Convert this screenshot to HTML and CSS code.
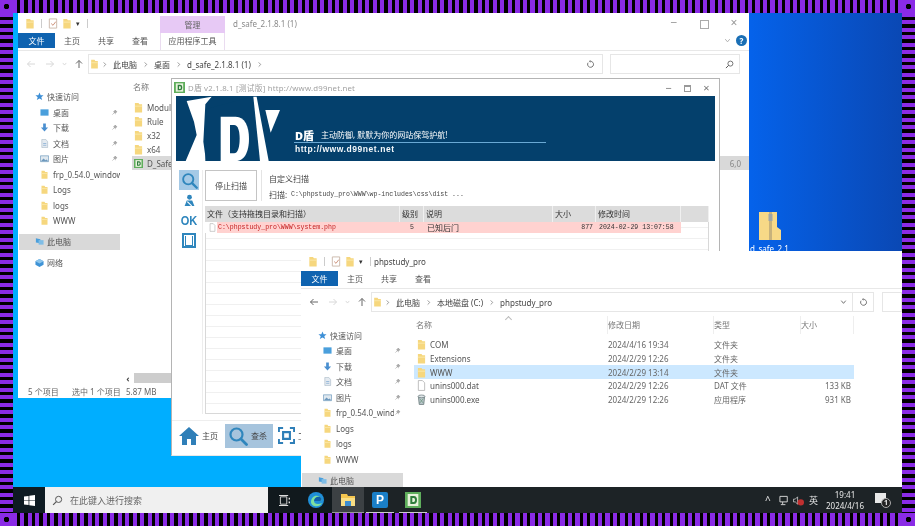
FILE: index.html
```html
<!DOCTYPE html>
<html lang="zh-CN">
<head>
<meta charset="utf-8">
<title>D盾 扫描</title>
<link rel="stylesheet" href="styles.css">
</head>
<body>
<svg class="defs" width="0" height="0" aria-hidden="true">
  <symbol id="folder" viewBox="0 0 10 12"><path d="M1 1h4l1 1.500h3v9H1z" fill="#f6d77e"/><path d="M1 4h8v1H1z" fill="#fbe9ad"/></symbol>
  <symbol id="check" viewBox="0 0 10 12"><path d="M1 1h8v10H1z" fill="#fff" stroke="#c9b7a8"/><path d="M3 6l2 2 3-4" fill="none" stroke="#c98a70"/></symbol>
  <symbol id="pin" viewBox="0 0 10 10"><path d="M2 8l2.500-2.500M3.500 4l3 3M6 1.500l2.500 2.500-2.500 2-2-2z" fill="#aaa" stroke="#999" stroke-width=".8"/></symbol>
  <symbol id="star" viewBox="0 0 10 10"><path d="M5 .5l1.300 3H9.500L7 5.700 8 9 5 7.200 2 9l1-3.300L.5 3.500h3.200z" fill="#3d8fd6"/></symbol>
  <symbol id="desk" viewBox="0 0 10 10"><path d="M.5 1.500h9v7h-9z" fill="#4a9fdc"/></symbol>
  <symbol id="down" viewBox="0 0 10 10"><path d="M3.500 .5h3v4.500H9L5 9.500 1 5h2.500z" fill="#4a8fd0"/></symbol>
  <symbol id="docs" viewBox="0 0 10 10"><path d="M2 .5h4.500L8.500 3v6.500H2z" fill="#e4eaf0" stroke="#9fb0c0" stroke-width=".6"/><path d="M3.500 5h3.500M3.500 7h3.500" stroke="#6fa0cc" stroke-width=".7"/></symbol>
  <symbol id="pics" viewBox="0 0 10 10"><path d="M.5 2h9v6.500h-9z" fill="#dfe8ef" stroke="#5f8fb8" stroke-width=".7"/><path d="M1 8l3-3 2 2 1.500-1L9 8z" fill="#6c98bd"/></symbol>
  <symbol id="pc" viewBox="0 0 10 10"><path d="M1 1.500l5 1v4.500L1 6z" fill="#4a9fdc"/><path d="M4 3.500h5.500v5H4z" fill="#7fbde6"/></symbol>
  <symbol id="net" viewBox="0 0 10 10"><path d="M5 1l4.500 2.500v4L5 10 .5 7.500v-4z" fill="#3f93d6"/><path d="M.5 3.500L5 6l4.500-2.500L5 1z" fill="#8cc5ec"/></symbol>
  <symbol id="file" viewBox="0 0 10 12"><path d="M1.500 .5h4.500l2.500 2.500v8.500h-7z" fill="#fff" stroke="#a8a8a8" stroke-width=".8"/></symbol>
  <symbol id="uninst" viewBox="0 0 10 12"><path d="M1.500 2.500h7l-1 9h-5z" fill="#bcc8cc" stroke="#5c6c70" stroke-width=".8"/><ellipse cx="5" cy="2.500" rx="3.800" ry="1.500" fill="#dfe6e8" stroke="#5c6c70" stroke-width=".7"/><path d="M3 5l4 5M7 5l-4 5" stroke="#5c8c70" stroke-width=".7"/></symbol>
  <symbol id="glass" viewBox="0 0 20 20"><circle cx="8.500" cy="8.500" r="6" fill="none" stroke="#2f86bd" stroke-width="2.200"/><path d="M13 13l5.500 5.500" stroke="#2f86bd" stroke-width="2.800" stroke-linecap="round"/></symbol>
  <symbol id="search-mini" viewBox="0 0 10 10"><circle cx="6" cy="4" r="2.800" fill="none" stroke="#555" stroke-width=".9"/><path d="M4 6L1 9" stroke="#555" stroke-width="1.100"/></symbol>
  <symbol id="refresh" viewBox="0 0 10 10"><path d="M5 1.500A3.300 3.300 0 1 1 2.300 3" fill="none" stroke="#666"/><path d="M5 0v3L3.300 1.500z" fill="#666"/></symbol>
  <symbol id="dlogo" viewBox="0 0 12 12"><path d="M0 0h12v12H0z" fill="#5fae5c"/><path d="M2 1.500h8v9H2z" fill="#e8f2dc"/><path d="M4 3h2.500c2 0 2.500 1.500 2.500 3s-.5 3-2.500 3H4z" fill="#2f7d3c"/><path d="M5.500 4.500h1c.8 0 1 .8 1 1.500s-.2 1.500-1 1.500h-1z" fill="#e8f2dc"/></symbol>
  <symbol id="nav-back" viewBox="0 0 10 10"><path d="M9 5H1.500M4.500 2L1.500 5l3 3" fill="none" stroke="currentColor"/></symbol>
  <symbol id="nav-fwd" viewBox="0 0 10 10"><path d="M1 5h7.500M5.500 2l3 3-3 3" fill="none" stroke="currentColor"/></symbol>
  <symbol id="nav-up" viewBox="0 0 10 10"><path d="M5 9V1.500M2 4.500l3-3 3 3" fill="none" stroke="currentColor"/></symbol>
  <symbol id="chev" viewBox="0 0 10 10"><path d="M2.500 3.500L5 6.500l2.500-3" fill="none" stroke="currentColor"/></symbol>
  <symbol id="crumb" viewBox="0 0 6 8"><path d="M2 1.500L4.500 4 2 6.500" fill="none" stroke="#888"/></symbol>
</svg>

<div class="frame">
  <i class="corner"></i><div class="stripes-h"></div><i class="corner"></i>
  <div class="stripes-v"></div>
  <main class="desktop">
    <div class="desk-icon">
      <svg class="zip" viewBox="0 0 22 28"><path d="M0 0h18v15l4 3v10H0z" fill="#f7d987"/><path d="M10 0h3v28h-3z" fill="#c7b27c"/><path d="M9.500 2h4v7h-4z" fill="#9ea6a8"/></svg>
      <span>d_safe_2.1</span>
    </div>

    <section class="win win-back">
      <header class="qat">
        <svg class="q-ico"><use href="#folder"/></svg><i class="q-sep"></i>
        <svg class="q-ico"><use href="#check"/></svg>
        <svg class="q-ico"><use href="#folder"/></svg>
        <span class="q-drop">▾</span><i class="q-sep"></i>
        <div class="ctx-title">管理</div>
        <span class="win-title">d_safe_2.1.8.1 (1)</span>
        <div class="caption"><span class="cap-btn">−</span><span class="cap-btn cap-max"></span><span class="cap-btn cap-x">×</span></div>
      </header>
      <nav class="tabs">
        <span class="tab tab-file">文件</span><span class="tab">主页</span><span class="tab">共享</span><span class="tab">查看</span>
        <span class="tab tab-ctx">应用程序工具</span>
        <svg class="ribbon-chev"><use href="#chev"/></svg><span class="help">?</span>
      </nav>
      <div class="addr">
        <svg class="nav-ico nav-dim"><use href="#nav-back"/></svg>
        <svg class="nav-ico nav-dim"><use href="#nav-fwd"/></svg>
        <svg class="nav-ico nav-chev"><use href="#chev"/></svg>
        <svg class="nav-ico nav-on"><use href="#nav-up"/></svg>
        <div class="addr-box addr-box-back">
          <svg class="crumb-f"><use href="#folder"/></svg><svg class="crumb"><use href="#crumb"/></svg>
          <span>此电脑</span><svg class="crumb"><use href="#crumb"/></svg>
          <span>桌面</span><svg class="crumb"><use href="#crumb"/></svg>
          <span>d_safe_2.1.8.1 (1)</span><svg class="crumb"><use href="#crumb"/></svg>
          <svg class="addr-refresh"><use href="#refresh"/></svg>
        </div>
        <div class="search-box search-back"><svg class="search-ico"><use href="#search-mini"/></svg></div>
      </div>
      <div class="body">
        <aside class="side side-back">
          <div class="side-row side-head"><svg class="s-ico"><use href="#star"/></svg>快速访问</div>
          <div class="side-row"><svg class="s-ico"><use href="#desk"/></svg><span class="s-name">桌面</span><svg class="pin"><use href="#pin"/></svg></div>
          <div class="side-row"><svg class="s-ico"><use href="#down"/></svg><span class="s-name">下载</span><svg class="pin"><use href="#pin"/></svg></div>
          <div class="side-row"><svg class="s-ico"><use href="#docs"/></svg><span class="s-name">文档</span><svg class="pin"><use href="#pin"/></svg></div>
          <div class="side-row"><svg class="s-ico"><use href="#pics"/></svg><span class="s-name">图片</span><svg class="pin"><use href="#pin"/></svg></div>
          <div class="side-row"><svg class="s-ico"><use href="#folder"/></svg><span class="s-name">frp_0.54.0_window</span></div>
          <div class="side-row"><svg class="s-ico"><use href="#folder"/></svg><span class="s-name">Logs</span></div>
          <div class="side-row"><svg class="s-ico"><use href="#folder"/></svg><span class="s-name">logs</span></div>
          <div class="side-row"><svg class="s-ico"><use href="#folder"/></svg><span class="s-name">WWW</span></div>
          <div class="side-row side-head side-sel side-gap"><svg class="s-ico"><use href="#pc"/></svg>此电脑</div>
          <div class="side-row side-head side-gap"><svg class="s-ico"><use href="#net"/></svg>网络</div>
        </aside>
        <div class="list list-back">
          <div class="l-head">名称</div>
          <div class="l-row"><svg class="l-ico"><use href="#folder"/></svg>Modules</div>
          <div class="l-row"><svg class="l-ico"><use href="#folder"/></svg>Rule</div>
          <div class="l-row"><svg class="l-ico"><use href="#folder"/></svg>x32</div>
          <div class="l-row"><svg class="l-ico"><use href="#folder"/></svg>x64</div>
          <div class="l-row l-sel-grey"><svg class="l-ico"><use href="#dlogo"/></svg>D_Safe<span class="l-size">6,0</span></div>
          <div class="hscroll"><span class="hs-arrow">‹</span><i class="hs-thumb"></i></div>
        </div>
      </div>
      <footer class="status"><span>5 个项目</span><span>选中 1 个项目</span><span>5.87 MB</span></footer>
    </section>

    <section class="dwin">
      <header class="d-title">
        <svg class="d-logo"><use href="#dlogo"/></svg>
        <span class="d-title-text">D盾 v2.1.8.1 [测试版] http://www.d99net.net</span>
        <div class="d-caption"><span>−</span><span class="d-max"></span><span>×</span></div>
      </header>
      <div class="banner">
        <svg class="banner-logo" viewBox="18 63 354 195">
          <path d="M50 78L125 65 106 88 100 200 108 258H47L80 180 72 140z" fill="#fff"/>
          <path d="M110 102L245 65 258 258H106z" fill="#04406c"/>
          <path d="M152 125h45c28 0 40 30 40 66s-12 67-40 67h-45z" fill="#fff"/>
          <path d="M180 150h12c12 0 17 18 17 41s-5 44-17 44h-12z" fill="#04406c"/>
          <path d="M250 65h10l36 193h-26z" fill="#fff"/>
          <path d="M286 105h44l-28 68z" fill="#fff"/>
        </svg>
        <div class="banner-copy">
          <div class="slogan"><b>D盾</b><span>主动防御, 默默为你的网站保驾护航!</span></div>
          <div class="banner-url">http://www.d99net.net</div>
        </div>
      </div>
      <div class="d-main">
        <div class="d-tools">
          <span class="tool tool-on"><svg class="tool-glass"><use href="#glass"/></svg></span>
          <span class="tool"><svg class="tool-user" viewBox="0 0 12 12"><circle cx="6" cy="3" r="2.200" fill="#2f86bd"/><path d="M1.500 11l2-5h5l2 5z" fill="#2f86bd"/><path d="M4 7l4 4" stroke="#fff"/></svg></span>
          <span class="tool tool-ok">OK</span>
          <span class="tool"><i class="tool-box"></i></span>
        </div>
        <div class="d-content">
          <div class="scan-bar">
            <button class="stop-btn">停止扫描</button>
            <div class="scan-info">
              <div>自定义扫描</div>
              <div class="scan-path"><span class="scan-label">扫描:</span><span class="mono">C:\phpstudy_pro\WWW\wp-includes\css\dist ...</span></div>
            </div>
          </div>
          <div class="tbl">
            <div class="t-row t-head">
              <span>文件（支持拖拽目录和扫描）</span><span>级别</span><span>说明</span><span>大小</span><span>修改时间</span><span></span>
            </div>
            <div class="t-row t-hit">
              <span class="t-file"><svg class="t-ico"><use href="#file"/></svg><em class="mono t-path">C:\phpstudy_pro\WWW\system.php</em></span>
              <span class="t-c mono">5</span><span class="t-desc">已知后门</span><span class="t-r mono">877</span><span class="mono t-date">2024-02-29 13:07:58</span><span class="t-none"></span>
            </div>
          </div>
        </div>
      </div>
      <nav class="d-nav">
        <span class="d-nav-item">
          <svg class="d-nav-ico" viewBox="0 0 20 20"><path d="M10 1L0 10h3v9h5v-6h4v6h5v-9h3z" fill="#2f7fb8"/></svg>主页
        </span>
        <span class="d-nav-item d-nav-on"><svg class="d-nav-ico"><use href="#glass"/></svg>查杀</span>
        <span class="d-nav-item"><svg class="d-nav-scan" viewBox="0 0 20 20"><path d="M1 6V1h5M14 1h5v5M19 14v5h-5M6 19H1v-5" fill="none" stroke="#2f7fb8" stroke-width="2.500"/><path d="M6 6h8v8H6z" fill="none" stroke="#2f7fb8" stroke-width="2.500"/></svg>工具</span>
      </nav>
    </section>

    <section class="win win-front">
      <header class="qat">
        <svg class="q-ico"><use href="#folder"/></svg><i class="q-sep"></i>
        <svg class="q-ico"><use href="#check"/></svg>
        <svg class="q-ico"><use href="#folder"/></svg>
        <span class="q-drop">▾</span><i class="q-sep"></i>
        <span class="front-title">phpstudy_pro</span>
      </header>
      <nav class="tabs">
        <span class="tab tab-file">文件</span><span class="tab">主页</span><span class="tab">共享</span><span class="tab">查看</span>
      </nav>
      <div class="addr">
        <svg class="nav-ico nav-on"><use href="#nav-back"/></svg>
        <svg class="nav-ico nav-dim"><use href="#nav-fwd"/></svg>
        <svg class="nav-ico nav-chev"><use href="#chev"/></svg>
        <svg class="nav-ico nav-on"><use href="#nav-up"/></svg>
        <div class="addr-box addr-box-front">
          <svg class="crumb-f"><use href="#folder"/></svg><svg class="crumb"><use href="#crumb"/></svg>
          <span>此电脑</span><svg class="crumb"><use href="#crumb"/></svg>
          <span>本地磁盘 (C:)</span><svg class="crumb"><use href="#crumb"/></svg>
          <span>phpstudy_pro</span>
          <svg class="addr-chev"><use href="#chev"/></svg><i class="addr-sep"></i>
          <svg class="addr-refresh addr-refresh-front"><use href="#refresh"/></svg>
        </div>
        <div class="search-box search-front"></div>
      </div>
      <div class="body">
        <aside class="side side-front">
          <div class="side-row side-head"><svg class="s-ico"><use href="#star"/></svg>快速访问</div>
          <div class="side-row"><svg class="s-ico"><use href="#desk"/></svg><span class="s-name">桌面</span><svg class="pin"><use href="#pin"/></svg></div>
          <div class="side-row"><svg class="s-ico"><use href="#down"/></svg><span class="s-name">下载</span><svg class="pin"><use href="#pin"/></svg></div>
          <div class="side-row"><svg class="s-ico"><use href="#docs"/></svg><span class="s-name">文档</span><svg class="pin"><use href="#pin"/></svg></div>
          <div class="side-row"><svg class="s-ico"><use href="#pics"/></svg><span class="s-name">图片</span><svg class="pin"><use href="#pin"/></svg></div>
          <div class="side-row"><svg class="s-ico"><use href="#folder"/></svg><span class="s-name">frp_0.54.0_wind</span><svg class="pin"><use href="#pin"/></svg></div>
          <div class="side-row"><svg class="s-ico"><use href="#folder"/></svg><span class="s-name">Logs</span></div>
          <div class="side-row"><svg class="s-ico"><use href="#folder"/></svg><span class="s-name">logs</span></div>
          <div class="side-row"><svg class="s-ico"><use href="#folder"/></svg><span class="s-name">WWW</span></div>
          <div class="side-row side-head side-sel side-gap"><svg class="s-ico"><use href="#pc"/></svg>此电脑</div>
        </aside>
        <div class="list list-front">
          <span class="sort-caret"></span>
          <div class="f-row f-head"><span>名称</span><span>修改日期</span><span>类型</span><span>大小</span></div>
          <div class="f-row"><span class="f-name"><svg class="l-ico"><use href="#folder"/></svg>COM</span><span>2024/4/16 19:34</span><span>文件夹</span><span></span></div>
          <div class="f-row"><span class="f-name"><svg class="l-ico"><use href="#folder"/></svg>Extensions</span><span>2024/2/29 12:26</span><span>文件夹</span><span></span></div>
          <div class="f-row f-sel"><span class="f-name"><svg class="l-ico"><use href="#folder"/></svg>WWW</span><span>2024/2/29 13:14</span><span>文件夹</span><span></span></div>
          <div class="f-row"><span class="f-name"><svg class="l-ico"><use href="#file"/></svg>unins000.dat</span><span>2024/2/29 12:26</span><span>DAT 文件</span><span class="f-size">133 KB</span></div>
          <div class="f-row"><span class="f-name"><svg class="l-ico"><use href="#uninst"/></svg>unins000.exe</span><span>2024/2/29 12:26</span><span>应用程序</span><span class="f-size">931 KB</span></div>
        </div>
      </div>
    </section>

    <footer class="taskbar">
      <span class="start"><svg class="win-logo" viewBox="0 0 12 12"><path d="M0 1.700L5 1v4.600H0zM5.800.9L12 0v5.600H5.800zM0 6.400h5V11l-5-.7zM5.800 6.400H12V12l-6.200-.9z" fill="#fff"/></svg></span>
      <div class="tb-search"><svg class="tb-search-ico"><use href="#search-mini"/></svg><span>在此键入进行搜索</span></div>
      <span class="tb-btn tb-dark"><svg class="tb-view" viewBox="0 0 12 12"><path d="M1.500 2h7v8h-7z" fill="none" stroke="#ddd"/><path d="M0 0h10v1H0zM0 11h10v1H0zM10.500 3h1.500v2h-1.500zM10.500 7h1.500v2h-1.500z" fill="#ddd"/></svg></span>
      <span class="tb-btn tb-dark"><svg class="tb-app" viewBox="0 0 16 16"><circle cx="8" cy="8" r="8" fill="#1f8fd8"/><path d="M3 10c0-5 5-8 9-5 2 1.500 2 4 0 4H6c0 3 4 4 8 2-2 5-11 4-11-1z" fill="#7fe0a0"/><path d="M6 9c0-3 3-5 6-4 2 1 2 4 0 4z" fill="#0f5fa8"/></svg></span>
      <span class="tb-btn tb-active"><svg class="tb-app" viewBox="0 0 16 16"><path d="M1 2h6l1 2h7v10H1z" fill="#f5c64f"/><path d="M1 6h14v8H1z" fill="#fadf85"/><path d="M5 9h6v5H5z" fill="#3f8fd0"/></svg></span>
      <span class="tb-btn tb-running"><i class="p-app">P</i></span>
      <span class="tb-btn tb-running"><svg class="tb-app" viewBox="0 0 12 12"><use href="#dlogo"/></svg></span>
      <div class="tray">
        <span class="tray-caret">^</span>
        <svg class="tray-ico tray-net" viewBox="0 0 12 12"><path d="M1 1.500h8v6H1z" fill="none" stroke="#ddd"/><path d="M4 7.500V10M2 10.500h5" stroke="#ddd"/></svg>
        <svg class="tray-ico tray-vol" viewBox="0 0 12 12"><path d="M.5 4.500h2L5 2v8L2.500 7.500h-2z" fill="none" stroke="#ddd" stroke-width=".8"/><circle cx="8.500" cy="8" r="3.500" fill="#c03030"/></svg>
        <span class="tray-lang">英</span>
        <div class="clock"><span>19:41</span><span>2024/4/16</span></div>
        <span class="notify"><i class="notify-box"></i><b class="notify-badge">1</b></span>
      </div>
    </footer>
  </main>
  <div class="stripes-v"></div>
  <i class="corner"></i><div class="stripes-h"></div><i class="corner"></i>
</div>
</body>
</html>
```

FILE: styles.css
```css
* { box-sizing: border-box; }
html, body { margin: 0; height: 100%; overflow: hidden; }
body { font: 8px "Noto Sans", "Noto Sans CJK SC", sans-serif; color: #555; background: #000; }
.defs { position: absolute; }
svg { display: block; flex: none; }
em { font-style: normal; }
i { display: block; }

.frame { display: grid; grid-template: 13px 500px 13px / 13px 889px 13px; width: 915px; height: 526px; }
.corner { background: radial-gradient(circle, #000 0 2.500px, transparent 3px) #8a2be6; }
.stripes-h { background: repeating-linear-gradient(90deg, #8a2be6 0 4px, #000 4px 7.500px); }
.stripes-v { background: repeating-linear-gradient(180deg, #8a2be6 0 4px, #000 4px 7.500px); }

.desktop {
  position: relative;
  overflow: hidden;
  filter: blur(.3px);
  background: linear-gradient(90deg, #00aeff 0 36%, #0562ea 83%, #0a48b4 100%);
}

/* explorer windows */
.win { position: absolute; display: flex; flex-direction: column; background: #fff; }
.win-back { left: 5px; top: 0; width: 731px; height: 385px; }
.win-front { left: 288px; top: 238px; width: 601px; height: 236px; overflow: hidden; }

.qat { display: flex; align-items: center; height: 20px; padding-left: 7px; position: relative; }
.q-ico { width: 10px; height: 11px; margin-right: 4px; }
.q-sep { width: 1px; height: 9px; background: #ccc; margin: 0 6px 0 2px; }
.q-drop { font-size: 7px; color: #333; width: 9px; }
.win-title { position: absolute; left: 215px; color: #8a8a8a; }
.front-title { color: #444; margin-left: -3px; }
.ctx-title { position: absolute; left: 142px; top: 3px; width: 65px; height: 17px; background: #e7c9f5; text-align: center; line-height: 17px; color: #666; }
.caption { position: absolute; right: 0; top: 0; display: flex; }
.cap-btn { width: 30px; height: 20px; text-align: center; line-height: 19px; color: #999; font-size: 12px; }
.cap-max::before { content: ""; display: block; width: 7px; height: 7px; border: 1px solid #aaa; margin: 7px auto 0; }

.tabs { display: flex; align-items: flex-start; height: 18px; padding-bottom: 3px; border-bottom: 1px solid #e8e8e8; position: relative; }
.tab { width: 34px; height: 15px; line-height: 15px; text-align: center; color: #555; }
.tab-file { width: 37px; background: #0f63b0; color: #fff; }
.tab-ctx { position: absolute; left: 142px; top: 0; width: 65px; height: 17px; border: solid #eadcf0; border-width: 0 1px; }
.ribbon-chev { position: absolute; right: 17px; top: 3px; width: 9px; height: 9px; color: #aaa; }
.help { position: absolute; right: 2px; top: 2px; width: 11px; height: 11px; border-radius: 50%; background: #1a6fb5; color: #fff; font-weight: 700; line-height: 11px; text-align: center; }

.addr { display: flex; align-items: center; height: 23px; padding: 3px 0 0 8px; }
.nav-ico { width: 10px; height: 10px; margin-right: 9px; }
.nav-dim { color: #d8d8d8; }
.nav-on { color: #666; }
.nav-chev { width: 7px; margin-left: -3px; margin-right: 6px; color: #ccc; }
.addr-box { display: flex; align-items: center; gap: 6px; width: 515px; height: 20px; margin-left: -5px; border: 1px solid #e6e6e6; padding-left: 1px; color: #444; position: relative; }
.crumb-f { width: 9px; height: 10px; margin-right: -3px; }
.crumb { width: 5px; height: 7px; }
.addr-refresh { width: 9px; height: 9px; position: absolute; right: 7px; top: 5px; }
.addr-refresh-front { right: 5px; }
.addr-chev { position: absolute; right: 25px; top: 4px; width: 9px; height: 10px; color: #666; }
.addr-sep { position: absolute; right: 20px; top: 0; width: 1px; height: 18px; background: #e6e6e6; }
.search-box { height: 20px; border: 1px solid #e6e6e6; position: relative; }
.search-back { width: 130px; margin-left: 7px; }
.search-front { width: 20px; margin-left: 8px; }
.search-ico { width: 9px; height: 9px; position: absolute; right: 5px; top: 5px; }

.body { display: flex; flex: 1; min-height: 0; }
.side { flex: none; display: flex; flex-direction: column; padding-left: 1px; }
.side-back { width: 104px; padding-top: 15px; }
.side-front { width: 103px; padding-top: 15.500px; }
.side-row { display: flex; align-items: center; height: 15.500px; padding-left: 21px; flex: none; white-space: nowrap; overflow: hidden; }
.side-row .s-ico { width: 9px; height: 9px; margin-right: 4px; }
.side-head { padding-left: 16px; color: #555; }
.side-head .s-ico { margin-right: 3px; }
.side-gap { margin-top: 5.500px; }
.side-sel { background: #d9d9d9; }
.side-row .s-name { flex: 1; min-width: 0; overflow: hidden; }
.pin { width: 7px; height: 7px; margin-right: 2px; }
.side-back .side-row { width: 101px; }
.side-front .side-row { width: 101px; }

.list { flex: 1; display: flex; flex-direction: column; position: relative; min-width: 0; }
.l-head { height: 26px; line-height: 26px; padding-left: 11px; color: #777; }
.l-row { display: flex; align-items: center; height: 14px; margin-left: 10px; padding-left: 2px; color: #555; }
.l-ico { width: 9px; height: 11px; margin-right: 4px; }
.l-sel-grey { background: #d9d9d9; }
.l-size { margin-left: auto; padding-right: 8px; color: #888; }
.hscroll { display: flex; align-items: center; height: 10px; margin-top: auto; margin-bottom: 1px; width: 50px; }
.hs-arrow { width: 12px; text-align: center; color: #444; font-size: 9px; font-weight: 700; }
.hs-thumb { flex: 1; height: 10px; background: #cdcdcd; }
.status { display: flex; height: 14px; align-items: center; padding-left: 10px; color: #666; }
.status span:nth-child(1) { width: 44px; }
.status span:nth-child(2) { width: 54px; }

.sort-caret { position: absolute; left: 102px; top: 5px; width: 5px; height: 5px; border: solid #bbb; border-width: 1px 0 0 1px; transform: rotate(45deg); }
.f-row { display: grid; grid-template-columns: 194px 106px 87px 53px; height: 13.700px; width: 440px; margin-left: 10px; align-items: center; color: #666; }
.f-head { height: 26px; color: #777; }
.f-head span { padding-left: 2px; height: 18px; line-height: 18px; border-right: 1px solid #eee; }
.f-head span:nth-child(n+2) { padding-left: 4px; margin-left: -4px; }
.f-name { display: flex; align-items: center; padding-left: 3px; color: #555; }
.f-sel { background: #cce8ff; }
.f-size { text-align: right; padding-right: 3px; }

/* D shield window */
.dwin { position: absolute; left: 158px; top: 65px; width: 549px; height: 378px; display: flex; flex-direction: column; background: #fff; border: 1px solid #b4b4b4; border-bottom-color: #e8e8e8; }
.d-title { display: flex; align-items: center; height: 17px; padding-left: 2px; flex: none; }
.d-logo { width: 11px; height: 11px; margin-right: 3px; }
.d-title-text { color: #a2a2a2; font-size: 7.800px; letter-spacing: .2px; }
.d-caption { margin-left: auto; display: flex; gap: 8px; padding-right: 7px; color: #777; font-size: 11px; }
.d-caption span { width: 11px; text-align: center; line-height: 12px; }
.d-caption .d-max { border: 1px solid #999; border-top-width: 2px; width: 7px; height: 7px; margin: 3px 2px 0; }
.banner { display: flex; flex: none; margin: 0 4px; height: 65px; background: #04406c; color: #fff; }
.banner-logo { width: 118px; height: 65px; }
.banner-copy { width: 252px; padding-top: 31px; }
.slogan { display: flex; align-items: center; height: 16px; border-bottom: 1px solid #6aa9d4; }
.slogan b { font-size: 11px; margin-right: 7px; margin-left: 1px; font-weight: 900; }
.banner-url { font: 700 8.500px/13px "Liberation Sans", sans-serif; letter-spacing: .55px; padding-left: 1px; color: #f4f8fb; }

.d-main { display: flex; height: 259px; flex: none; padding-top: 9px; }
.d-tools { width: 31px; padding: 0 3px 0 7px; display: flex; flex-direction: column; align-items: center; border-right: 1px solid #ededed; height: 244px; margin-right: 2px; flex: none; }
.tool { display: flex; align-items: center; justify-content: center; width: 20px; height: 20px; flex: none; }
.tool-on { background: #a4c9e6; }
.tool-glass { width: 17px; height: 17px; }
.tool-user { width: 13px; height: 13px; }
.tool-ok { font: 700 13px "Liberation Sans Narrow", "Liberation Sans", sans-serif; color: #2f86bd; transform: scaleX(.85); }
.tool-box { width: 14px; height: 15px; border: 2px solid #2f86bd; padding: 1px; }
.tool-box::before { content: ""; display: block; height: 100%; border: solid #2f86bd; border-width: 0 1px 1px; }
.d-content { width: 504px; color: #444; }
.scan-bar { display: flex; height: 36px; align-items: flex-start; }
.stop-btn { width: 52px; height: 31px; padding: 0; margin-right: 4px; background: #fff; border: 1px solid #c4c4c4; font: inherit; color: #444; }
.scan-info { height: 31px; padding: 2px 0 0 7px; border-left: 1px solid #e4e4e4; display: flex; flex-direction: column; justify-content: space-between; line-height: 13px; }
.scan-path { display: flex; align-items: center; }
.scan-label { width: 22px; }
.mono { font-family: "Liberation Mono", monospace; font-size: 6.550px; color: #444; }
.tbl {
  height: 208px;
  border: 1px solid #d8d8d8;
  border-top: 0;
  background: repeating-linear-gradient(180deg, #fff 0 10px, #f0f0f0 10px 11px);
}
.t-row { display: grid; grid-template-columns: 195px 24px 129px 43px 85px 28px; height: 11px; align-items: center; margin-left: -1px; }
.t-head { height: 16px; background: #dcdcdc; color: #333; }
.t-head span { height: 16px; line-height: 16px; padding-left: 2px; border-right: 1px solid #f0f0f0; white-space: nowrap; }
.t-hit > span { height: 11px; line-height: 11px; background: #ffd2d0; color: #333; }
.t-hit > .t-file { background: linear-gradient(90deg, #fff 12px, #ffd2d0 12px); display: flex; align-items: center; padding-left: 4px; }
.t-ico { width: 7px; height: 9px; margin-right: 2px; }
.t-path { color: #c42020; }
.t-hit > .t-c { text-align: center; }
.t-desc { padding-left: 3px; }
.t-hit > .t-r { text-align: right; padding-right: 3px; }
.t-date { padding-left: 3px; }
.t-hit > .t-none { background: transparent; }

.d-nav { display: flex; align-items: center; flex: 1; border-top: 1px solid #eee; padding: 0 0 5px 7px; gap: 5px; }
.d-nav-item { display: flex; align-items: center; gap: 3px; height: 24px; color: #444; white-space: nowrap; }
.d-nav-item:first-child { width: 41px; }
.d-nav-ico { width: 20px; height: 20px; }
.d-nav-scan { width: 17px; height: 17px; }
.d-nav-on { width: 48px; background: #a6c4dd; padding-left: 3px; }

/* desktop zip */
.desk-icon { position: absolute; left: 737px; top: 199px; display: flex; flex-direction: column; align-items: flex-start; color: #fff; }
.zip { width: 22px; height: 28px; margin: 0 0 3px 9px; }

/* taskbar */
.taskbar { position: absolute; left: 0; right: 0; bottom: 0; height: 26px; display: flex; align-items: stretch; background: #1d2326; color: #e8e8e8; }
.start { width: 32px; display: flex; align-items: center; justify-content: center; background: #0e1b22; }
.win-logo { width: 11px; height: 11px; }
.tb-search { width: 223px; display: flex; align-items: center; background: #f0f0f0; color: #666; font-size: 9px; padding-left: 7px; }
.tb-search-ico { width: 11px; height: 11px; margin-right: 7px; }
.tb-btn { width: 32px; display: flex; align-items: center; justify-content: center; }
.tb-dark { background: #11191d; }
.tb-view { width: 11px; height: 11px; }
.tb-app { width: 16px; height: 16px; }
.tb-active { background: #3c4144; border-bottom: 1px solid #999; }
.tb-running { border-bottom: 1px solid #ccc; margin: 0 2px; width: 28px; }
.tb-running + .tb-running { margin-left: 3px; }
.p-app { width: 16px; height: 16px; border-radius: 2px; background: #1a7fc8; color: #fff; font: 700 12px/16px "Liberation Sans", sans-serif; text-align: center; }
.tray { margin-left: auto; display: flex; align-items: center; }
.tray-caret { width: 12px; text-align: center; font-size: 10px; margin-right: 5px; }
.tray-ico { width: 11px; height: 11px; }
.tray-net { margin-right: 3px; }
.tray-vol { margin-right: 5px; }
.tray-lang { font-size: 9px; margin-right: 5px; }
.clock { width: 44px; display: flex; flex-direction: column; align-items: center; line-height: 11px; margin-right: 6px; }
.notify { width: 19px; height: 16px; position: relative; margin-right: 10px; }
.notify-box { width: 11px; height: 10px; margin-left: 2px; margin-top: 1px; background: #e8e8e8; }
.notify-badge { position: absolute; left: 8px; top: 6px; width: 10px; height: 10px; border: 1px solid #aaa; border-radius: 50%; background: #222; font-size: 7px; line-height: 8px; text-align: center; }
```
